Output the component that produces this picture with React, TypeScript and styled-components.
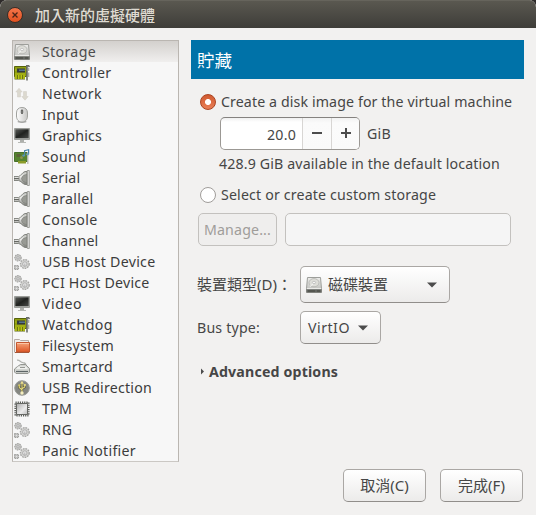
import React from 'react';
import styled, { createGlobalStyle } from 'styled-components';

const GlobalStyle = createGlobalStyle`
  * { box-sizing: border-box; }
  body { margin: 0; background: #2e2b2a; overflow: hidden; }
  button, input { font: inherit; color: inherit; }
`;

const Dialog = styled.div`
  width: 536px;
  height: 515px;
  display: flex;
  flex-direction: column;
  background: #f2f1f0;
  color: #464646;
  border-radius: 7px 7px 0 0;
  overflow: hidden;
  font: 14.2px/21px 'Noto Sans', 'Noto Sans CJK TC', sans-serif;
`;

const TitleBar = styled.header`
  height: 28px;
  flex: none;
  display: flex;
  align-items: center;
  padding: 2px 0 0 7px;
  gap: 12px;
  background: linear-gradient(#5b5951, #3e3d39);
  box-shadow: inset 0 1px #66645c;
  border-radius: 7px 7px 0 0;
`;

const CloseButton = styled.button`
  width: 16px;
  height: 16px;
  padding: 0;
  display: grid;
  place-items: center;
  border: 1px solid #3a2e27;
  border-radius: 50%;
  background: linear-gradient(#f4764b, #e2511f);
`;

const Title = styled.h1`
  margin: 0;
  font: 500 15px/20px 'Noto Sans CJK TC', sans-serif;
  color: #dfdbd2;
`;

const Content = styled.div`
  display: flex;
  gap: 12px;
  padding: 12px 12px 0;
  height: 434px;
  flex: none;
`;

const DeviceList = styled.ul`
  width: 167px;
  height: 422px;
  margin: 0;
  padding: 0;
  list-style: none;
  flex: none;
  background: #f7f7f7;
  border: 1px solid #bab6b1;
  border-bottom-color: #cbc8c4;
  color: #3c3c3c;
`;

const DeviceRow = styled.li<{ $selected?: boolean }>`
  height: 21px;
  display: flex;
  align-items: center;
  gap: 12px;
  padding-left: 1px;
  background: ${(p) => (p.$selected ? 'linear-gradient(#d3d0cd, #f0efee)' : 'none')};
  color: ${(p) => (p.$selected ? '#4c4c4c' : 'inherit')};
`;

const Label = styled.span<{ $track?: number }>`
  white-space: nowrap;
  letter-spacing: ${(p) => p.$track ?? 0}px;
`;

const Icon = styled.svg`
  width: 16px;
  height: 16px;
  flex: none;
  display: block;
`;

const Panel = styled.main`
  width: 333px;
  display: flex;
  flex-direction: column;
`;

const Banner = styled.h2`
  margin: 0 0 12px;
  height: 39px;
  padding-left: 6px;
  background: #0072a8;
  color: #fff;
  font: 400 17.6px/39px 'Noto Sans CJK TC', sans-serif;
`;

const RadioRow = styled.label`
  height: 21px;
  display: flex;
  align-items: center;
  gap: 5px;
  padding-left: 9px;
`;

const Radio = styled.span<{ $checked?: boolean }>`
  width: 16px;
  height: 16px;
  flex: none;
  border-radius: 50%;
  border: 1px solid ${(p) => (p.$checked ? '#ac4421' : '#a09d9a')};
  background: ${(p) =>
    p.$checked
      ? 'radial-gradient(circle, #fff 2.6px, transparent 3.4px), linear-gradient(#d15a30, #e87f57)'
      : '#fff'};
`;

const SizeRow = styled.div`
  display: flex;
  align-items: center;
  gap: 7px;
  margin: 5px 0 3px 29px;
`;

const SpinBox = styled.div`
  width: 140px;
  height: 33px;
  display: flex;
  border: 1px solid #9b9894;
  border-top-color: #85827f;
  border-radius: 5px;
  background: linear-gradient(#f0f0f0, #fff 4px);
  overflow: hidden;
`;

const SpinValue = styled.div`
  width: 81px;
  flex: none;
  padding: 6px 6px 0 0;
  text-align: right;
`;

const SpinButton = styled.button`
  width: 29px;
  flex: none;
  padding: 0 0 1px;
  display: grid;
  place-items: center;
  border: 0;
  border-left: 1px solid #d8d6d4;
  background: linear-gradient(#f2f2f2, #fbfbfb 5px, #fafafa);
`;

const Note = styled.p`
  margin: 0 0 10px 28px;
  height: 21px;
`;

const CustomRow = styled.div`
  display: flex;
  gap: 8px;
  margin: 8px 0 20px 7px;
`;

const Button = styled.button<{ $width: number; $height?: number }>`
  width: ${(p) => p.$width}px;
  height: ${(p) => p.$height ?? 33}px;
  padding: 0 7px;
  display: flex;
  align-items: center;
  justify-content: center;
  border: 1px solid #aaa7a4;
  border-bottom-color: #918e8b;
  border-radius: 5px;
  background: linear-gradient(#fff, #ecebea);
  color: #464646;

  &:disabled {
    border-color: #c3c1be;
    background: #efeeed;
    color: #a09d9a;
  }
`;

const ComboButton = styled(Button)<{ $inset?: number }>`
  justify-content: flex-start;
  gap: 6px;
  padding-left: ${(p) => p.$inset ?? 7}px;
`;

const PathEntry = styled.input`
  width: 226px;
  height: 33px;
  border: 1px solid #c3c1be;
  border-radius: 5px;
  background: #f5f5f5;
`;

const FieldRow = styled.div<{ $gap: number }>`
  display: flex;
  align-items: center;
  padding-left: 6px;
  margin-bottom: ${(p) => p.$gap}px;
`;

const FieldName = styled.div`
  width: 103px;
  white-space: nowrap;
`;

const CjkText = styled.span`
  font: 15px/21px 'Noto Sans', 'Noto Sans CJK TC', sans-serif;
  white-space: nowrap;
`;

const Arrow = styled.svg<{ $shift?: number }>`
  width: 10px;
  height: 6px;
  margin-left: ${(p) => p.$shift ?? 0}px;
`;

const Expander = styled.div`
  display: flex;
  align-items: center;
  gap: 4px;
  height: 21px;
  padding-left: 9px;
  font-weight: 700;
`;

const Actions = styled.footer`
  display: flex;
  justify-content: flex-end;
  gap: 14px;
  padding: 7px 13px 0;
`;

type Kind =
  | 'disk' | 'card' | 'network' | 'mouse' | 'screen' | 'sound' | 'plug'
  | 'gears' | 'folder' | 'smartcard' | 'usb' | 'chip';

const Glyph = ({ kind, uid }: { kind: Kind; uid: string }) => {
  const g = `g-${uid}`;
  switch (kind) {
    case 'disk':
      return (
        <Icon viewBox="0 0 16 16">
          <defs><linearGradient id={g} x2="0" y2="1"><stop stopColor="#ededeb" /><stop offset="1" stopColor="#b5b6b2" /></linearGradient></defs>
          <path d="M1.5.5h13l1 11v4H.5v-4z" fill={`url(#${g})`} stroke="#9d9e9a" />
          <ellipse cx="8" cy="5.7" rx="5" ry="4.1" fill="#deded9" stroke="#b4b4b0" strokeWidth=".8" />
          <ellipse cx="8" cy="5.5" rx="1.6" ry="1.2" fill="#f7f7f6" stroke="#aaa" strokeWidth=".6" />
          <path d="M4 9.5 7 6.8" stroke="#f8f8f8" />
          <path d="M.5 12.2h15v3.3H.5z" fill="#646661" />
          <path d="M1 11.6h14" stroke="#efefed" />
          <path d="M2 14h7M11 14h3" stroke="#444640" />
        </Icon>
      );
    case 'card':
      return (
        <Icon viewBox="0 0 16 16">
          <path d="M.5 1.500h12v10H.5z" fill="#8f9e10" stroke="#56620a" />
          <path d="M3 3.500h8v4H3z" fill="#34393d" /><path d="M5 4.500h6V6H5z" fill="#56758c" />
          <path d="M1 9h10M1 5h1.500" stroke="#b5bf18" />
          <path d="M.5 10h10.500v4.500H.5z" fill="#5f6812" />
          <path d="M2 10v4M4.700 10v4M7.300 10v4M10 10v4" stroke="#b8c416" strokeWidth="1.700" />
          <path d="M12 .8h2.500L15.500 2M13 1v14.500" stroke="#6b6e69" strokeWidth="1.600" fill="none" />
          <path d="M14.700 3v3M14.700 7.500v4.500" stroke="#a2a49f" strokeWidth="1.200" />
        </Icon>
      );
    case 'network':
      return (
        <Icon viewBox="0 0 16 16" fill="#dcd9cf" stroke="#d0cdc4" strokeWidth=".5">
          <path d="M5 2.2 8.2 6H6.5v5h-3V6H1.8z" />
          <path d="M9.5 5.5h3v5h1.7L11 14.2 7.8 10.5h1.7z" />
        </Icon>
      );
    case 'mouse':
      return (
        <Icon viewBox="0 0 16 16">
          <defs><linearGradient id={g}><stop stopColor="#fff" /><stop offset="1" stopColor="#c6c6c4" /></linearGradient></defs>
          <ellipse cx="8" cy="14.8" rx="4.5" ry="1.1" fill="#aaa" />
          <path d="M2.5 6C2.5 2.5 4.5.5 8 .5s5.5 2 5.5 5.5v3c0 3.500-2 6-5.500 6s-5.500-2.500-5.500-6z" fill={`url(#${g})`} stroke="#a1a29e" />
          <rect x="6.800" y="2.500" width="2.400" height="4.500" rx="1.200" fill="#5a5c58" /><path d="M8 3.500v2.500" stroke="#999" strokeWidth=".8" />
        </Icon>
      );
    case 'screen':
      return (
        <Icon viewBox="0 0 16 16">
          <defs><linearGradient id={g} x2="1" y2="1"><stop stopColor="#5a5c59" /><stop offset=".5" stopColor="#20221f" /><stop offset="1" stopColor="#484a47" /></linearGradient></defs>
          <path d="M.5.5h15v11H.5z" fill="#b6b8b4" stroke="#9b9d99" />
          <path d="M1.3 1.3h13.4v8.9H1.3z" fill={`url(#${g})`} />
          <path d="M6 12h4v2H6z" fill="#aeb0ac" /><path d="M4 14.5h8" stroke="#b7b9b5" />
        </Icon>
      );
    case 'sound':
      return (
        <Icon viewBox="0 0 16 16">
          <path d="M.5 3.500h13v9H.5z" fill="#568330" stroke="#47702a" />
          <path d="M4 12h8v2.400H4z" fill="#8b9c2a" />
          <path d="M2.500 5h4v3h-4z" fill="#5c6238" /><circle cx="7.500" cy="8.700" r="1.400" fill="#8f9350" />
          <path d="M13.800 3v12" stroke="#bcbeb9" strokeWidth="1.400" />
          <path d="M10.600 6.500V1.700l4-1v4.500" fill="none" stroke="#4b86ab" strokeWidth="1.200" />
          <ellipse cx="9.600" cy="6.600" rx="1.500" ry="1.100" fill="#5a93b8" /><ellipse cx="13.600" cy="5.300" rx="1.500" ry="1.100" fill="#6e9fbe" />
        </Icon>
      );
    case 'plug':
      return (
        <Icon viewBox="0 0 16 16">
          <defs><linearGradient id={g} x2="0" y2="1"><stop stopColor="#b9bbb6" /><stop offset=".4" stopColor="#efefed" /><stop offset="1" stopColor="#777974" /></linearGradient></defs>
          <path d="M0 6.500h4.500C7 6 8 2.500 11 1.500h2v13h-2C8 13.500 7 11 4.500 10.500H0z" fill={`url(#${g})`} stroke="#7b7d77" strokeWidth=".9" />
          <path d="M0 8.500h5" stroke="#656762" />
          <path d="M5 6.800v3.400" stroke="#858781" strokeWidth=".8" />
          <path d="M7.500 8.500C8 6 10 4.500 13 4.500v8C10 12.500 8 11 7.500 8.500z" fill="#989a94" stroke="#777973" strokeWidth=".6" />
          <path d="M13.300.5h2v15h-2z" fill="#e1e1df" stroke="#8b8d88" strokeWidth=".8" />
        </Icon>
      );
    case 'gears':
      return (
        <Icon viewBox="0 0 16 16" fill="none">
          <circle cx="4" cy="3.800" r="3.200" fill="#c8c8c6" stroke="#a4a4a2" strokeWidth="1.100" strokeDasharray="1.500 .800" />
          <circle cx="4" cy="3.800" r="1.200" fill="#ddd" stroke="#999" strokeWidth=".6" />
          <circle cx="10.800" cy="10" r="4.400" fill="#d4d4d2" stroke="#a7a7a5" strokeWidth="1.300" strokeDasharray="1.700 .900" />
          <circle cx="10.800" cy="10" r="2.200" fill="#e6e6e6" stroke="#a4a4a4" strokeWidth=".8" />
          <path d="M10.800 9.500v3.500" stroke="#b4b4b4" />
          <path d="M.5 11.500h4v4h-4z" fill="#bdbdbb" stroke="#a0a09e" strokeWidth="1.100" strokeDasharray="1.300 .800" />
          <circle cx="2.500" cy="13.500" r=".8" fill="#e5e5e5" />
        </Icon>
      );
    case 'folder':
      return (
        <Icon viewBox="0 0 16 16">
          <defs><linearGradient id={g} x2="0" y2="1"><stop stopColor="#f5a67c" /><stop offset="1" stopColor="#dd5524" /></linearGradient></defs>
          <path d="M.5 14.500v-13h5l1 1h8V5" fill="#f1eeeb" stroke="#b5aaa4" />
          <path d="M2.500 4.500h13v9.500h-13z" fill={`url(#${g})`} stroke="#c4572f" />
          <path d="M3 5.500h12" stroke="#fac5a5" />
          <path d="M1 14.500h14" stroke="#a55637" />
        </Icon>
      );
    case 'smartcard':
      return (
        <Icon viewBox="0 0 16 16" fill="none">
          <path d="M3 1.200c3-.5 3 2 6 2.500 2 .2 3 1.500 3 3" stroke="#b1b3af" strokeWidth="1.200" />
          <path d="m3.500 7.500 3-2h5l4 4v3.500l-1.500 1.500H2L.5 13v-3z" fill="#d2d4d0" stroke="#8a8c88" strokeWidth=".9" />
          <path d="M4 7.500h8l2 2.500H2z" fill="#eff0ee" /><path d="M6 8.500h5" stroke="#969894" />
          <path d="M2 12.500h12" stroke="#5d6566" strokeWidth="1.200" />
        </Icon>
      );
    case 'usb':
      return (
        <Icon viewBox="0 0 16 16" fill="none">
          <circle cx="8" cy="8" r="7.300" fill="#858781" stroke="#999b96" />
          <path d="M8 3v10M5.200 5.500v2L8 10M10.800 5v2L8 8.800" stroke="#4a4a35" strokeWidth="2.200" />
          <path d="M8 3v10M5.200 5.500v2L8 10M10.800 5v2L8 8.800" stroke="#e9dc7c" strokeWidth="1.100" />
          <path d="m8 .8 1.800 3H6.200z" fill="#eee092" /><circle cx="8" cy="13" r="1.700" fill="#f5eec0" />
          <circle cx="5.200" cy="5.300" r="1.100" fill="#d9ca64" /><path d="M9.800 4h2v2h-2z" fill="#e5d87a" />
        </Icon>
      );
    case 'chip':
      return (
        <Icon viewBox="0 0 16 16">
          <defs><linearGradient id={g} x2="1" y2="1"><stop stopColor="#aaa" /><stop offset=".6" stopColor="#ececec" /><stop offset="1" stopColor="#bbb" /></linearGradient></defs>
          <path d="M1.500 1.500h13v13h-13z" fill="none" stroke="#5c5e5a" strokeWidth="2.200" strokeDasharray="1.200 .967" />
          <path d="M2.500 2.500h11v11h-11z" fill={`url(#${g})`} stroke="#666864" />
        </Icon>
      );
  }
};

const devices: { name: string; kind: Kind; track: number }[] = [
  { name: 'Storage', kind: 'disk', track: 0.32 },
  { name: 'Controller', kind: 'card', track: 0.27 },
  { name: 'Network', kind: 'network', track: 0.42 },
  { name: 'Input', kind: 'mouse', track: 0.16 },
  { name: 'Graphics', kind: 'screen', track: 0.17 },
  { name: 'Sound', kind: 'sound', track: 0.27 },
  { name: 'Serial', kind: 'plug', track: 0.26 },
  { name: 'Parallel', kind: 'plug', track: 0.3 },
  { name: 'Console', kind: 'plug', track: 0.31 },
  { name: 'Channel', kind: 'plug', track: 0.23 },
  { name: 'USB Host Device', kind: 'gears', track: 0.26 },
  { name: 'PCI Host Device', kind: 'gears', track: 0.2 },
  { name: 'Video', kind: 'screen', track: 0.5 },
  { name: 'Watchdog', kind: 'card', track: 0.42 },
  { name: 'Filesystem', kind: 'folder', track: 0.21 },
  { name: 'Smartcard', kind: 'smartcard', track: 0.22 },
  { name: 'USB Redirection', kind: 'usb', track: 0.21 },
  { name: 'TPM', kind: 'chip', track: 0.22 },
  { name: 'RNG', kind: 'gears', track: 0.02 },
  { name: 'Panic Notifier', kind: 'gears', track: 0.28 },
];

export default function App() {
  return (
    <Dialog>
      <GlobalStyle />
      <TitleBar>
        <CloseButton aria-label="Close">
          <svg width="6" height="6" viewBox="0 0 6 6"><path d="m.5.5 5 5m0-5-5 5" stroke="#4a2518" strokeWidth="1.3" /></svg>
        </CloseButton>
        <Title>加入新的虛擬硬體</Title>
      </TitleBar>
      <Content>
        <DeviceList>
          {devices.map((d, i) => (
            <DeviceRow key={d.name} $selected={i === 0}>
              <Glyph kind={d.kind} uid={`row${i}`} />
              <Label $track={d.track}>{d.name}</Label>
            </DeviceRow>
          ))}
        </DeviceList>
        <Panel>
          <Banner>貯藏</Banner>
          <RadioRow>
            <Radio $checked />
            <Label $track={0.11}>Create a disk image for the virtual machine</Label>
          </RadioRow>
          <SizeRow>
            <SpinBox>
              <SpinValue><Label $track={0.2}>20.0</Label></SpinValue>
              <SpinButton aria-label="Decrease"><svg width="12" height="12"><path d="M1 6h10" stroke="#4c4c4c" strokeWidth="2" /></svg></SpinButton>
              <SpinButton aria-label="Increase"><svg width="12" height="12"><path d="M1 6h10M6 1v10" stroke="#4c4c4c" strokeWidth="2" /></svg></SpinButton>
            </SpinBox>
            <Label $track={0.26}>GiB</Label>
          </SizeRow>
          <Note><Label $track={0.14}>428.9 GiB available in the default location</Label></Note>
          <RadioRow>
            <Radio />
            <Label $track={0.16}>Select or create custom storage</Label>
          </RadioRow>
          <CustomRow>
            <Button $width={79} disabled><Label $track={0.15}>Manage...</Label></Button>
            <PathEntry disabled />
          </CustomRow>
          <FieldRow $gap={8}>
            <FieldName><CjkText>裝置類型(D)：</CjkText></FieldName>
            <ComboButton $width={150} $height={37} $inset={5}>
              <Glyph kind="disk" uid="combo" />
              <CjkText>磁碟裝置</CjkText>
              <Arrow $shift={33} viewBox="0 0 10 6"><path d="M0 .5h10L5 5.500z" fill="#4c4c4c" /></Arrow>
            </ComboButton>
          </FieldRow>
          <FieldRow $gap={17}>
            <FieldName><Label $track={0.18}>Bus type:</Label></FieldName>
            <ComboButton $width={81}>
              <Label $track={0.49}>VirtIO</Label>
              <Arrow $shift={2} viewBox="0 0 10 6"><path d="M0 .5h10L5 5.500z" fill="#4c4c4c" /></Arrow>
            </ComboButton>
          </FieldRow>
          <Expander>
            <svg width="5" height="8" viewBox="0 0 5 8"><path d="M1 .5v6l3-3z" fill="#4c4c4c" /></svg>
            <Label $track={0.16}>Advanced options</Label>
          </Expander>
        </Panel>
      </Content>
      <Actions>
        <Button $width={83}><CjkText>取消(C)</CjkText></Button>
        <Button $width={83}><CjkText>完成(F)</CjkText></Button>
      </Actions>
    </Dialog>
  );
}
